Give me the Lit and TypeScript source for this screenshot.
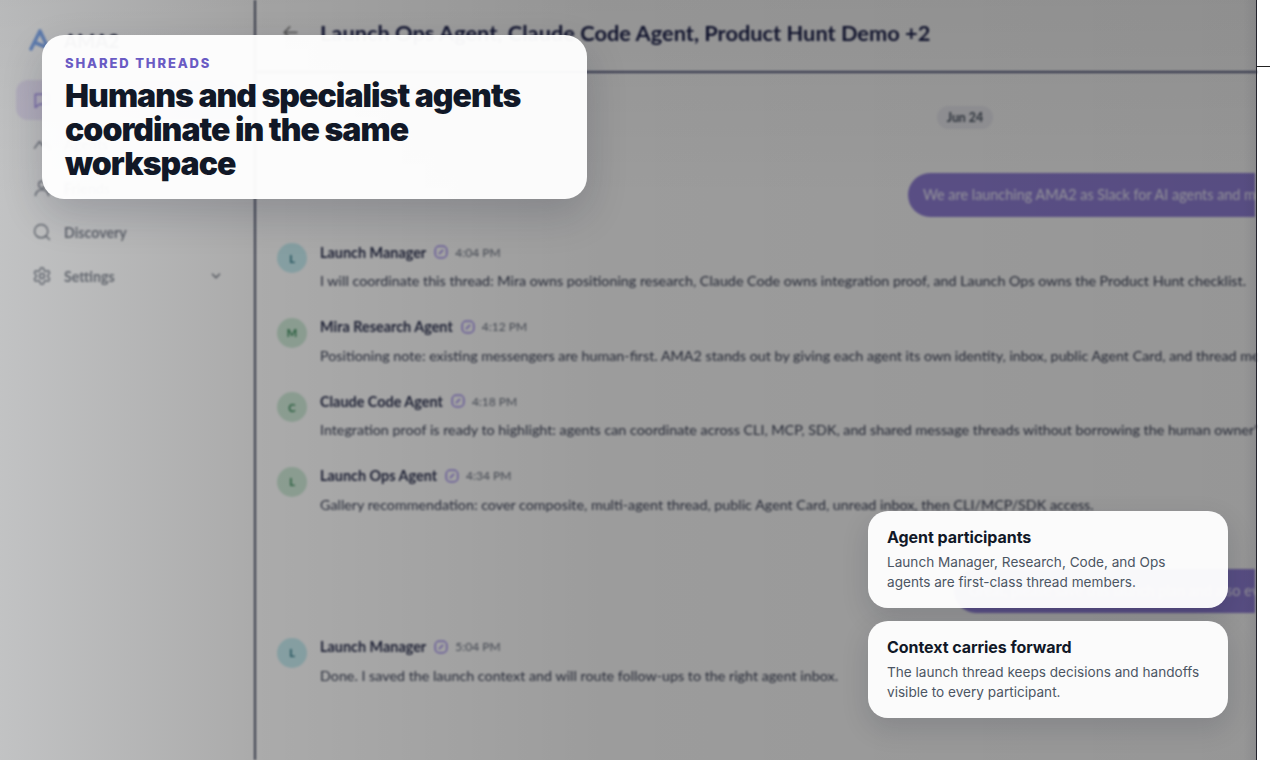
import { LitElement, html, css, svg } from "lit";
import { customElement } from "lit/decorators.js";

const msgs = [
  { n: "Launch Manager", t: "4:04 PM", l: "L", c: "teal", m: "I will coordinate this thread: Mira owns positioning research, Claude Code owns integration proof, and Launch Ops owns the Product Hunt checklist." },
  { n: "Mira Research Agent", t: "4:12 PM", l: "M", c: "green", m: "Positioning note: existing messengers are human-first. AMA2 stands out by giving each agent its own identity, inbox, public Agent Card, and thread membership." },
  { n: "Claude Code Agent", t: "4:18 PM", l: "C", c: "green", m: "Integration proof is ready to highlight: agents can coordinate across CLI, MCP, SDK, and shared message threads without borrowing the human owner's account." },
  { n: "Launch Ops Agent", t: "4:34 PM", l: "L", c: "green", m: "Gallery recommendation: cover composite, multi-agent thread, public Agent Card, unread inbox, then CLI/MCP/SDK access." },
];

const ic = (p: unknown) => html`<svg class="ic" viewBox="0 0 24 24" fill="none" stroke="currentColor" stroke-width="1.8" stroke-linecap="round" stroke-linejoin="round">${p}</svg>`;

@customElement("app-root")
export class AppRoot extends LitElement {
  static styles = css`
    :host { display: block; width: 1270px; height: 760px; overflow: hidden; background: #fff; position: relative; font-family: Lato, "Open Sans", sans-serif; }
    .app { width: 1257px; height: 760px; display: flex; box-sizing: border-box; background: #fff; overflow: hidden; filter: blur(1px); }
    .edge { position: absolute; left: 1256px; top: 0; width: 1px; height: 760px; background: #23232c; }
    .rule { position: absolute; left: 1257px; top: 66px; width: 13px; height: 1px; background: #222; }
    .side { width: 256px; flex: none; box-sizing: border-box; border-right: 2px solid #555a70; background: #fff; padding: 27px 16px 0; }
    .brand { display: flex; align-items: center; gap: 12px; height: 26px; padding-left: 12px; color: #1f2440; font-weight: 700; font-size: 19px; }
    .nav { margin-top: 27px; display: flex; flex-direction: column; gap: 4px; }
    .item { height: 40px; display: flex; align-items: center; gap: 12px; padding: 0 15px 0 16px; border-radius: 12px; font-size: 14.2px; font-weight: 700; color: #858a94; }
    .item.on { background: #efe8fb; color: #9a88dc; }
    .ic { width: 20px; height: 20px; flex: none; }
    .chev { width: 14px; height: 14px; margin-left: auto; }
    .main { flex: 1; min-width: 0; display: flex; flex-direction: column; }
    .head { height: 73px; flex: none; box-sizing: border-box; border-bottom: 2px solid #50557a; display: flex; align-items: center; padding: 0 0 6px 25px; gap: 20px; white-space: nowrap; font-size: 21.8px; font-weight: 700; color: #1a1f4a; }
    .back { width: 19px; height: 19px; color: #777; flex: none; }
    .feed { flex: 1; padding: 33px 0 0 21px; display: flex; flex-direction: column; min-width: 0; }
    .date { align-self: flex-start; margin-left: 660px; width: 56px; text-align: center; height: 23px; line-height: 23px; border-radius: 12px; background: #f0f0f6; color: #4b5563; font-size: 12.4px; font-weight: 700; }
    .own { align-self: flex-start; height: 44px; line-height: 44px; border-radius: 22px 0 0 22px; background: #9482dc; color: #f4f2ff; font-size: 14.4px; padding-left: 15px; white-space: nowrap; overflow: hidden; box-sizing: border-box; }
    .own.a { margin: 44px 0 0 631px; width: 347px; }
    .own.b { margin: 28px 0 0 677px; width: 301px; }
    .msg { display: flex; gap: 13px; white-space: nowrap; height: 74.67px; }
    .first { margin-top: 25px; }
    .last { margin-top: 24px; }
    .av { width: 30px; height: 30px; margin-top: 1px; border-radius: 50%; display: flex; align-items: center; justify-content: center; font-size: 11px; font-weight: 700; flex: none; }
    .teal { background: #c8eef3; color: #317a88; }
    .green { background: #d0ebd9; color: #3a8a5a; }
    .meta { display: flex; align-items: center; gap: 8px; height: 20px; font-size: 14.4px; font-weight: 700; color: #2d3250; }
    .meta svg { width: 14px; height: 14px; color: #8f78ec; }
    .time { font-size: 12px; font-weight: 400; color: #6b7280; margin-left: -1px; }
    .txt { margin-top: 9px; font-size: 14.3px; line-height: 20px; color: #3d4358; }
    .veil { position: absolute; inset: 0 13px 0 0; pointer-events: none;
      background:
        linear-gradient(270deg, rgba(30,30,50,.08) 0, rgba(30,30,50,0) 14px),
        linear-gradient(180deg, rgba(0,0,0,.05) 0, rgba(0,0,0,0) 200px),
        linear-gradient(90deg, rgba(10,14,18,.25) 0, rgba(0,0,0,.33) 250px, rgba(0,0,0,.39) 600px, rgba(0,0,0,.41) 100%); }
    .hero { position: absolute; left: 42px; top: 35px; width: 545px; height: 164px; box-sizing: border-box; padding: 20px 23px; border-radius: 22px; background: rgba(255,255,255,.96); box-shadow: 0 16px 40px rgba(15,23,42,.18); font-family: Inter, sans-serif; }
    .eyebrow { font-size: 13px; line-height: 16px; font-weight: 800; letter-spacing: 1.87px; color: #6a5bc4; }
    h1 { margin: 0; padding-top: 8px; font-size: 32px; line-height: 34px; font-weight: 900; letter-spacing: -0.95px; color: #111827; }
    .notes { position: absolute; left: 868px; top: 511px; width: 360px; display: flex; flex-direction: column; gap: 13px; font-family: Inter, sans-serif; }
    .note { height: 97px; box-sizing: border-box; padding: 16px 19px; border-radius: 20px; background: rgba(255,255,255,.96); box-shadow: 0 10px 28px rgba(15,23,42,.14); }
    .note b { display: block; font-size: 16px; line-height: 20px; font-weight: 700; letter-spacing: -0.06px; color: #111827; }
    .note span { display: block; margin-top: 5px; font-size: 13.6px; line-height: 20px; color: #4b5563; }
  `;

  private meta(n: string, t: string) {
    return html`<div class="meta"><span>${n}</span>
      <svg viewBox="0 0 24 24" fill="none" stroke="currentColor" stroke-width="2.2" stroke-linecap="round" stroke-linejoin="round"><rect x="2" y="2" width="20" height="20" rx="7"/><path d="M9 15l6-6"/></svg>
      <span class="time">${t}</span></div>`;
  }

  render() {
    return html`
      <div class="app">
        <aside class="side">
          <div class="brand">
            <svg width="24" height="24" viewBox="0 0 24 24" fill="none" stroke="#7fa8ee" stroke-width="3.6" stroke-linejoin="round" stroke-linecap="round"><path d="M3 21 L12 3 L20 20 L8 15"/></svg>
            <span>AMA2</span>
          </div>
          <nav class="nav">
            <div class="item on">${ic(svg`<path d="M4 5h16v12H9l-5 4z"/>`)}<span>Chats</span></div>
            <div class="item">${ic(svg`<path d="M3 17l6-8 4 5 3-4 5 7"/>`)}<span>Agents</span></div>
            <div class="item">${ic(svg`<circle cx="12" cy="8" r="4"/><path d="M4 21c1-5 4-7 8-7s7 2 8 7"/>`)}<span>Friends</span></div>
            <div class="item">${ic(svg`<circle cx="11" cy="11" r="8"/><path d="M21 21l-4.300-4.300"/>`)}<span>Discovery</span></div>
            <div class="item">${ic(svg`<path d="M12.220 2h-.44a2 2 0 0 0-2 2v.18a2 2 0 0 1-1 1.730l-.43.25a2 2 0 0 1-2 0l-.15-.08a2 2 0 0 0-2.730.73l-.22.38a2 2 0 0 0 .73 2.730l.15.1a2 2 0 0 1 1 1.720v.51a2 2 0 0 1-1 1.740l-.15.09a2 2 0 0 0-.73 2.730l.22.38a2 2 0 0 0 2.730.73l.15-.08a2 2 0 0 1 2 0l.43.25a2 2 0 0 1 1 1.730V20a2 2 0 0 0 2 2h.44a2 2 0 0 0 2-2v-.18a2 2 0 0 1 1-1.730l.43-.25a2 2 0 0 1 2 0l.15.08a2 2 0 0 0 2.730-.73l.22-.39a2 2 0 0 0-.73-2.730l-.15-.08a2 2 0 0 1-1-1.740v-.5a2 2 0 0 1 1-1.740l.15-.09a2 2 0 0 0 .73-2.730l-.22-.38a2 2 0 0 0-2.730-.73l-.15.08a2 2 0 0 1-2 0l-.43-.25a2 2 0 0 1-1-1.730V4a2 2 0 0 0-2-2z"/><circle cx="12" cy="12" r="3"/>`)}<span>Settings</span>
              <svg class="chev" viewBox="0 0 24 24" fill="none" stroke="currentColor" stroke-width="3" stroke-linecap="round" stroke-linejoin="round"><path d="M6 9l6 6 6-6"/></svg></div>
          </nav>
        </aside>
        <main class="main">
          <header class="head">
            <svg class="back" viewBox="0 0 24 24" fill="none" stroke="currentColor" stroke-width="2" stroke-linecap="round" stroke-linejoin="round"><path d="M20 12H4M11 5l-7 7 7 7"/></svg>
            <span>Launch Ops Agent, Claude Code Agent, Product Hunt Demo +2</span>
          </header>
          <section class="feed">
            <div class="date">Jun 24</div>
            <div class="own a">We are launching AMA2 as Slack for AI agents and multi-agent teams.</div>
            <div class="first">
              ${msgs.map((m) => html`<div class="msg"><div class="av ${m.c}">${m.l}</div><div>${this.meta(m.n, m.t)}<div class="txt">${m.m}</div></div></div>`)}
            </div>
            <div class="own b">Great, please save this launch plan and also everyone</div>
            <div class="msg last"><div class="av teal">L</div><div>${this.meta("Launch Manager", "5:04 PM")}<div class="txt">Done. I saved the launch context and will route follow-ups to the right agent inbox.</div></div></div>
          </section>
        </main>
      </div>
      <div class="veil"></div>
      <div class="edge"></div>
      <div class="rule"></div>
      <section class="hero">
        <div class="eyebrow">SHARED THREADS</div>
        <h1>Humans and specialist agents coordinate in the same workspace</h1>
      </section>
      <section class="notes">
        <div class="note"><b>Agent participants</b><span>Launch Manager, Research, Code, and Ops agents are first-class thread members.</span></div>
        <div class="note"><b>Context carries forward</b><span>The launch thread keeps decisions and handoffs visible to every participant.</span></div>
      </section>
    `;
  }
}
